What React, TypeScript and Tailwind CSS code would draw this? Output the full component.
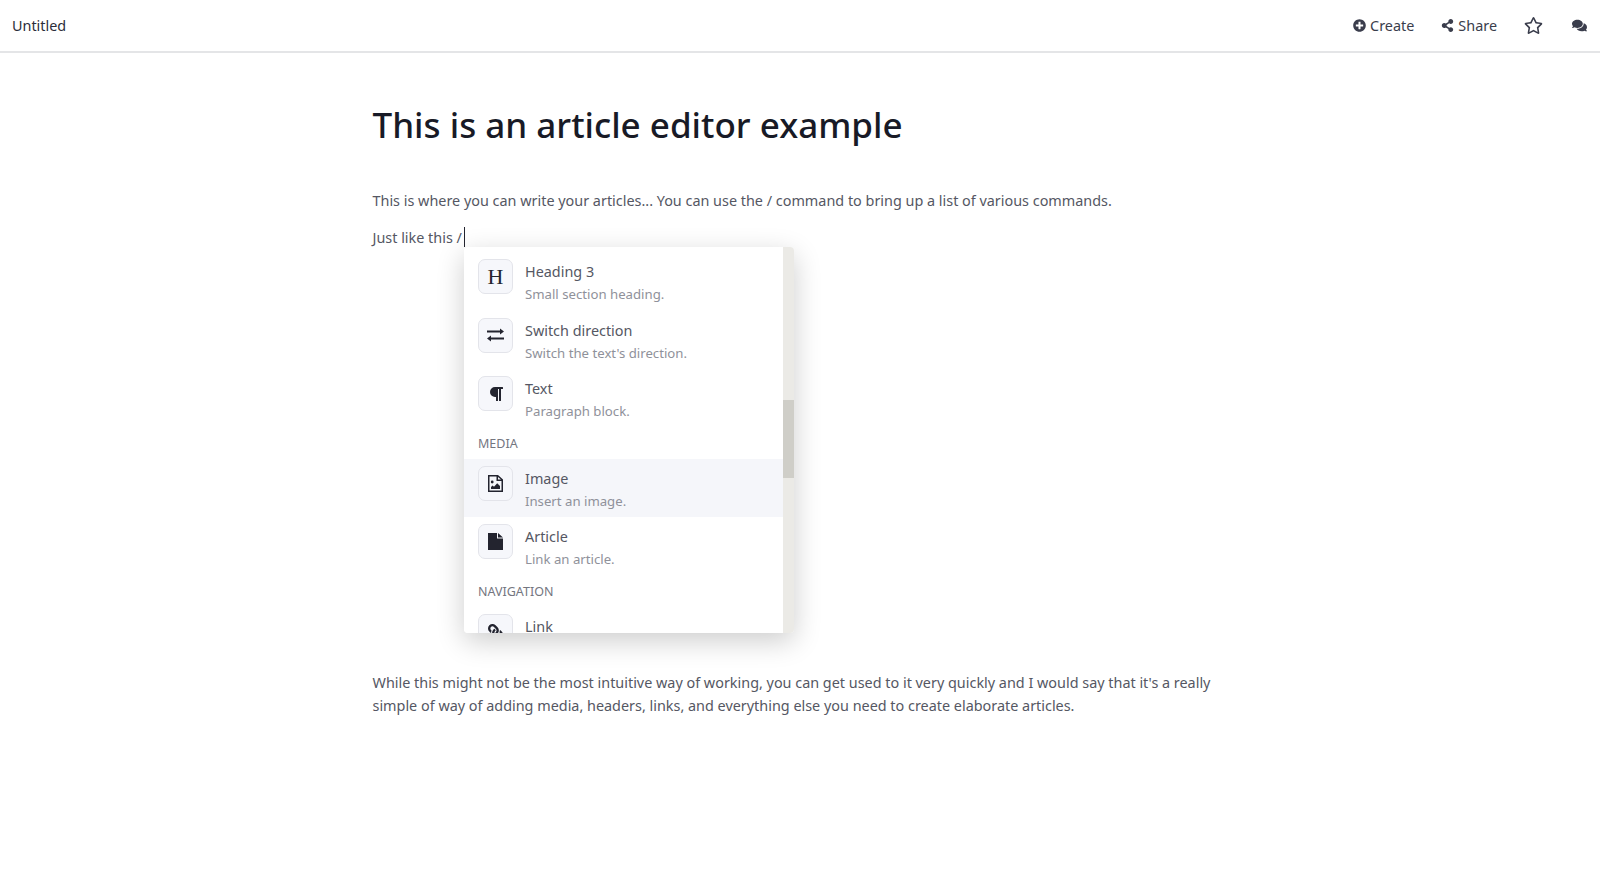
import React from 'react';
import { FaPlusCircle, FaShareAlt, FaRegStar, FaComments, FaLink, FaParagraph } from 'react-icons/fa';

const font = { fontFamily: '"Noto Sans", sans-serif' };

type Cmd = { title: string; desc?: string; icon: React.ReactNode; active?: boolean };

const SwitchIcon = () => (
  <svg width="17" height="14" viewBox="0 0 17 14" fill="#23242f">
    <path d="M0 2.5h13V.5l4 3-4 3v-2H0zM17 11.5H4v2l-4-3 4-3v2h13z" />
  </svg>
);

const ImageIcon = () => (
  <svg width="15" height="17" viewBox="0 0 15 17" fill="#23242f">
    <path fillRule="evenodd" d="M0 0h10l5 4.5V17H0zM1.5 1.5v14h12V6H8.5V1.5zM10 2v2.5h3z" />
    <circle cx="4.2" cy="7" r="1.4" />
    <path d="M3 14v-2l1.6-1.6 1.4 1.4 3.2-3.6L12 11v3z" />
  </svg>
);

const FileIcon = () => (
  <svg width="15" height="17" viewBox="0 0 15 17" fill="#23242f">
    <path d="M0 0h9v5.5h6V17H0zM10 0l5 4.5h-5z" />
  </svg>
);

const Item = ({ title, desc, icon, active }: Cmd) => (
  <div className={`flex h-[58.5px] shrink-0 gap-3 px-[14px] pt-[7px] ${active ? 'bg-[#f5f6fa]' : 'bg-white'}`}>
    <div className="flex h-[35px] w-[35px] shrink-0 items-center justify-center rounded-[7px] border border-[#e3e4ea] bg-[#f6f7fb] text-[#23242f]">
      {icon}
    </div>
    <div className="mt-[3px] min-w-0">
      <div className="text-[14.4px] leading-[20px] text-[#555763]">{title}</div>
      {desc && <div className="mt-[2px] text-[13.2px] leading-[20px] text-[#8f919a]">{desc}</div>}
    </div>
  </div>
);

const GroupLabel = ({ children, className }: { children: string; className: string }) => (
  <div className={`px-[14px] text-[12.5px] leading-[16px] text-[#74767f] ${className}`}>{children}</div>
);

export default function App() {
  return (
    <div className="min-h-[873px] bg-white text-[14.4px] text-[#555763]" style={font}>
      <header className="flex h-[53px] items-center justify-between border-b-2 border-[#e4e5e7] pl-3 pr-[13px]">
        <span className="text-[#2b2d3a]">Untitled</span>
        <div className="flex items-center text-[#3a3d4c]">
          <span className="flex items-center gap-1">
            <FaPlusCircle size={13} /> Create
          </span>
          <span className="ml-[27px] flex items-center gap-1">
            <FaShareAlt size={13} /> Share
          </span>
          <FaRegStar size={19} className="ml-[27px]" />
          <FaComments size={15} className="ml-[29px]" />
        </div>
      </header>

      <main className="ml-[372.5px] w-[860px]">
        <h1 className="mt-[45px] text-[35px] font-medium leading-[54px] text-[#181a26]">This is an article editor example</h1>
        <p className="mt-[37px] leading-[24px]">
          This is where you can write your articles... You can use the / command to bring up a list of various commands.
        </p>
        <div className="relative mt-[10px] h-[24px] leading-[24px]">
          Just like this /<span className="ml-[2px] inline-block h-[20px] w-[1px] translate-y-[4px] bg-[#23242f]" />
          <div className="absolute left-[91.5px] top-[24px] z-10 flex h-[386px] w-[330px] overflow-hidden rounded-[4px] bg-white shadow-[0_8px_28px_rgba(0,0,0,0.2)]">
            <div className="flex w-[319px] flex-col overflow-hidden pt-[5px]">
              <Item title="Heading 3" desc="Small section heading." icon={<span className="text-[22px] leading-none" style={{ fontFamily: '"Liberation Serif", serif' }}>H</span>} />
              <Item title="Switch direction" desc="Switch the text's direction." icon={<SwitchIcon />} />
              <Item title="Text" desc="Paragraph block." icon={<FaParagraph size={16} />} />
              <GroupLabel className="mt-[8px] mb-[7px]">MEDIA</GroupLabel>
              <Item active title="Image" desc="Insert an image." icon={<ImageIcon />} />
              <Item title="Article" desc="Link an article." icon={<FileIcon />} />
              <GroupLabel className="mt-[8px] mb-[7px]">NAVIGATION</GroupLabel>
              <Item title="Link" icon={<FaLink size={15} className="scale-x-[-1]" />} />
            </div>
            <div className="w-[11px] bg-[#ebeae6] pt-[153px]">
              <div className="h-[78px] bg-[#cfcec8]" />
            </div>
          </div>
        </div>
        <p className="mt-[424px] w-[860px] leading-[23px]">
          While this might not be the most intuitive way of working, you can get used to it very quickly and I would say that it's a really simple of way of adding media, headers, links, and everything else you need to create elaborate articles.
        </p>
      </main>
    </div>
  );
}
